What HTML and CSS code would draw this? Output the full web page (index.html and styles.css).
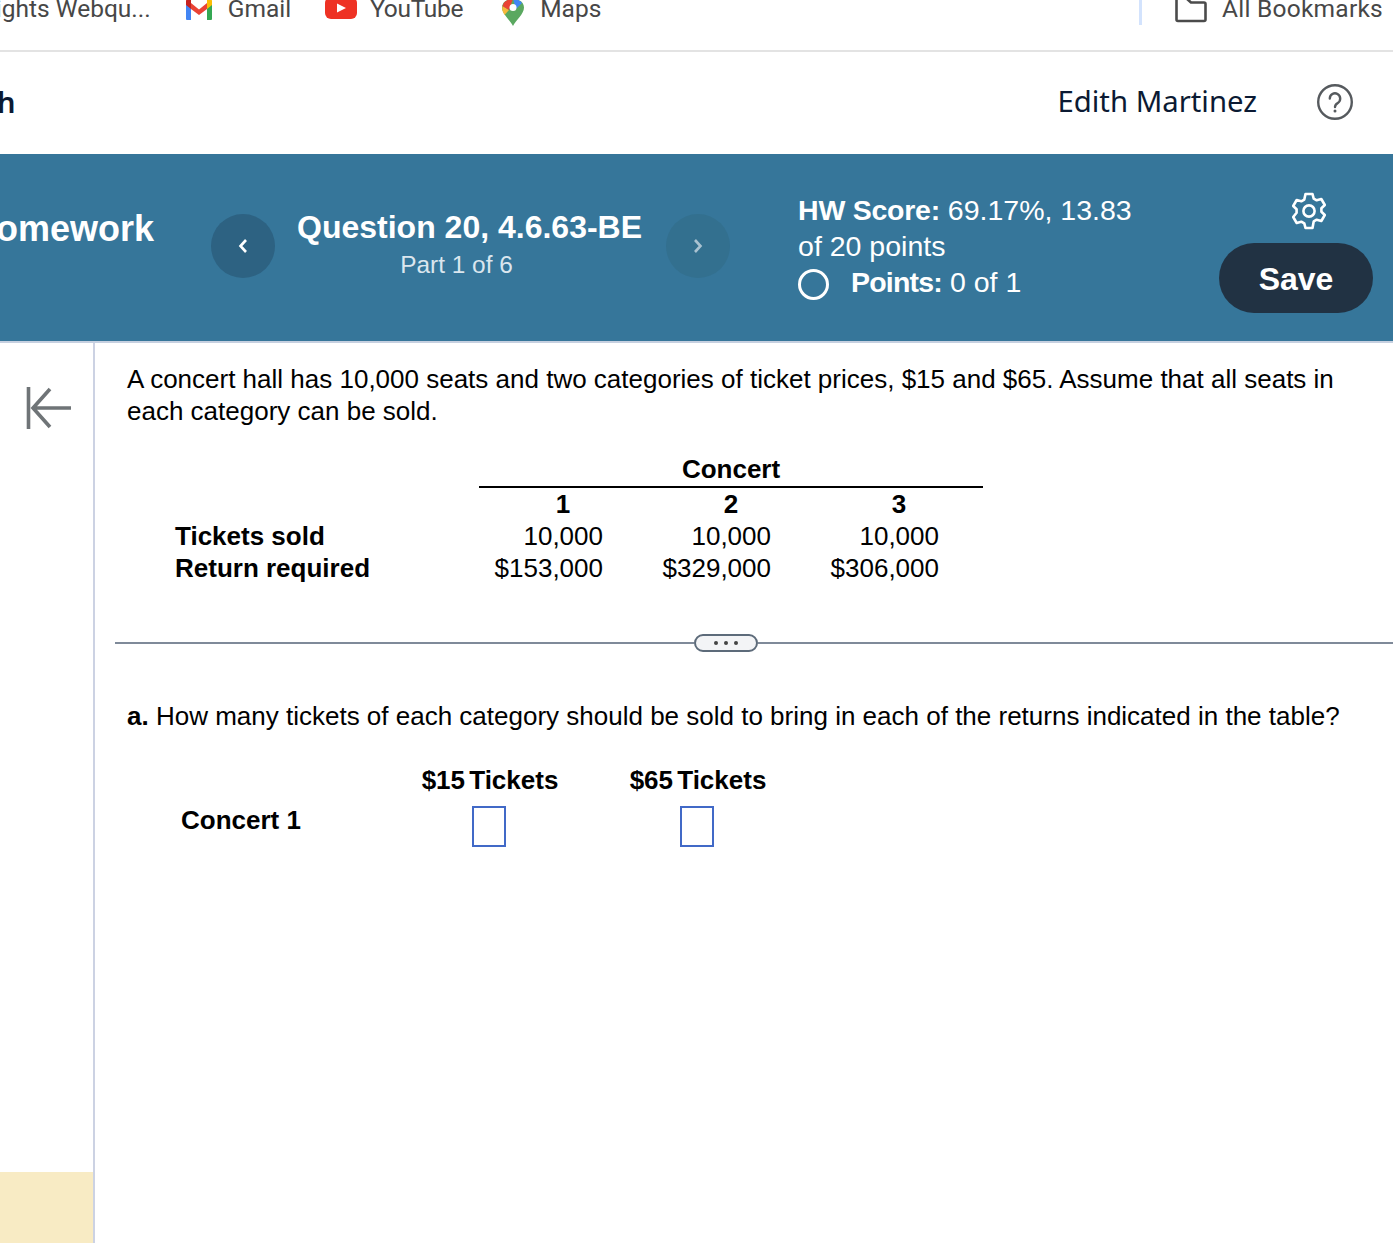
FILE: index.html
```html
<!DOCTYPE html>
<html lang="en">
<head>
<meta charset="utf-8">
<title>Homework</title>
<link rel="stylesheet" href="styles.css">
</head>
<body>
<div class="page">
  <nav class="bookmarks">
    <span class="bm bm-first">Insights Webqu...</span>
    <span class="bm bm-gmail">
      <svg class="ic-gmail" viewBox="0 0 28 24" width="28" height="24"><path d="M1 2v18a1 1 0 0 0 1 1h4V9z" fill="#4285f4"/><path d="M27 2v18a1 1 0 0 1-1 1h-4V9z" fill="#34a853"/><path d="M6 4l8 6.5L22 4v6l-8 6-8-6z" fill="#ea4335"/><path d="M1 1.500a3 3 0 0 1 5 -.5v9L1 6z" fill="#c5221f"/><path d="M27 1.500a3 3 0 0 0-5 -.5v9l5-4z" fill="#fbbc04"/></svg>
      Gmail</span>
    <span class="bm bm-yt">
      <svg viewBox="0 0 32 26" width="32" height="26"><rect x="0" y="0" width="32" height="22" rx="6" fill="#ee3224"/><path d="M12 6.500l9 4.500-9 4.500z" fill="#fff"/></svg>
      YouTube</span>
    <span class="bm bm-maps">
      <svg viewBox="0 0 24 28" width="24" height="28"><path d="M12 26C9 20 1 14 1 7.500 1 3 5 -1 12 -1s11 4 11 8.500C23 14 15 20 12 26z" fill="#5aa860"/><path d="M2 12C1 10 1 8 1.500 6L8 10 3.500 15z" fill="#f6b93b"/><path d="M1.500 6C3 1 7 -1 12 -1L8 10z" fill="#ea4335"/><path d="M12 -1c4 0 7 1.500 9 4L15 9z" fill="#4285f4"/><circle cx="12" cy="7.500" r="3.500" fill="#fff"/></svg>
      Maps</span>
    <span class="bm-spacer"></span>
    <span class="bm-sep"></span>
    <span class="bm bm-all">
      <svg viewBox="0 0 32 30" width="32" height="30"><path d="M1.500 1v21.500a1.500 1.500 0 0 0 1.500 1.500h26a1.500 1.500 0 0 0 1.500-1.500V7a1.500 1.500 0 0 0-1.500-1.500H16L11 1" fill="none" stroke="#4b4b4b" stroke-width="2.600" stroke-linejoin="round"/></svg>
      All Bookmarks</span>
  </nav>

  <header class="topbar">
    <span class="course">h</span>
    <span class="user">Edith Martinez</span>
    <svg class="help" viewBox="0 0 36 36" width="36" height="36"><circle cx="18" cy="18" r="16.800" fill="none" stroke="#565a5e" stroke-width="2.400"/><path d="M12.800 14.500a5.200 5.200 0 1 1 8 4.400c-1.900 1.200-2.800 2-2.800 4.100" fill="none" stroke="#565a5e" stroke-width="2.400" stroke-linecap="round"/><circle cx="18" cy="27" r="1.500" fill="#565a5e"/></svg>
  </header>

  <section class="band">
    <h1 class="band-title">Homework</h1>
    <button class="nav-btn nav-prev" type="button" aria-label="Previous question">
      <svg viewBox="0 0 12 18" width="12" height="18"><path d="M9 3L3.500 9 9 15" fill="none" stroke="#fff" stroke-width="2.600"/></svg>
    </button>
    <div class="question">
      <div class="q-name">Question 20, 4.6.63-BE</div>
      <div class="q-part">Part 1 of 6</div>
    </div>
    <button class="nav-btn nav-next" type="button" aria-label="Next question">
      <svg viewBox="0 0 12 18" width="12" height="18"><path d="M3 3l5.500 6L3 15" fill="none" stroke="#a9c2d1" stroke-width="2.600"/></svg>
    </button>
    <div class="score">
      <div><b>HW Score:</b> 69.17%, 13.83</div>
      <div>of 20 points</div>
      <div class="score-pts"><span class="ring"></span><span><b>Points:</b> 0 of 1</span></div>
    </div>
    <div class="actions">
      <svg class="gear" viewBox="0 0 36 38" width="36" height="38"><path d="M14.500 2h7l1.200 4.600 3 1.700 4.600-1.300 3.500 6-3.400 3.300v3.400l3.400 3.300-3.500 6-4.600-1.300-3 1.700L21.500 36h-7l-1.200-4.600-3-1.700-4.600 1.300-3.500-6L5.600 20.700v-3.400L2.200 14l3.500-6 4.600 1.300 3-1.700z" fill="none" stroke="#fff" stroke-width="2.600" stroke-linejoin="round"/><circle cx="18" cy="19" r="5.600" fill="none" stroke="#fff" stroke-width="2.600"/></svg>
      <button class="save" type="button">Save</button>
    </div>
  </section>

  <div class="body">
    <aside class="side">
      <svg class="collapse" viewBox="0 0 46 44" width="46" height="44"><path d="M2.500 1v42M45 22H8M24 3L7 22l17 19" fill="none" stroke="#6f7477" stroke-width="3.600"/></svg>
      <div class="side-note"></div>
    </aside>
    <main class="content">
      <p class="para intro">A concert hall has 10,000 seats and two categories of ticket prices, $15 and $65. Assume that all seats in each category can be sold.</p>
      <table class="data">
        <colgroup><col class="col-l"><col class="col-n"><col class="col-n"><col class="col-n"></colgroup>
        <thead>
          <tr><th class="lbl"></th><th class="group" colspan="3">Concert</th></tr>
          <tr><th class="lbl"></th><th>1</th><th>2</th><th>3</th></tr>
        </thead>
        <tbody>
          <tr><th class="lbl">Tickets sold</th><td>10,000</td><td>10,000</td><td>10,000</td></tr>
          <tr><th class="lbl">Return required</th><td>$153,000</td><td>$329,000</td><td>$306,000</td></tr>
        </tbody>
      </table>
      <div class="divider">
        <span class="rule rule-l"></span>
        <span class="pill"><i></i><i></i><i></i></span>
        <span class="rule rule-r"></span>
      </div>
      <p class="para ask"><b>a.</b> How many tickets of each category should be sold to bring in each of the returns indicated in the table?</p>
      <div class="answers">
        <span></span><b class="ans-h">$15 Tickets</b><b class="ans-h">$65 Tickets</b>
        <b class="ans-l">Concert 1</b>
        <span class="ans-c"><span class="box"></span></span>
        <span class="ans-c"><span class="box"></span></span>
      </div>
    </main>
  </div>
</div>
</body>
</html>
```

FILE: styles.css
```css
* { box-sizing: border-box; }
html, body { margin: 0; padding: 0; background: #fff; }
.page {
  width: 1393px;
  height: 1243px;
  overflow: hidden;
  display: flex;
  flex-direction: column;
  font-family: "Liberation Sans", Arial, sans-serif;
  color: #000;
}

/* bookmarks bar */
.bookmarks {
  height: 52px;
  flex: none;
  display: flex;
  align-items: flex-end;
  padding-bottom: 26px;
  border-bottom: 2px solid #e3e3e3;
  font-family: Roboto, sans-serif;
  font-size: 24.5px;
  color: #474747;
  white-space: nowrap;
  overflow: hidden;
}
.bm { display: flex; align-items: flex-end; line-height: 30px; gap: 15px; flex: none; }
.bm svg { flex: none; margin-bottom: 1px; }
.bm-first { margin-left: -37px; }
.bm-gmail { margin-left: 34px; }
.bm-yt { margin-left: 34px; gap: 13px; letter-spacing: -.3px; }
.bm-maps { margin-left: 38px; gap: 15px; }
.bm-maps svg { margin-bottom: -4px; }
.bm-spacer { flex: 1; }
.bm-sep { width: 3px; height: 30px; background: #d3e3fd; flex: none; margin-bottom: -1px; }
.bm-all { margin-left: 33px; margin-right: 10px; gap: 15px; letter-spacing: .25px; }
.bm-all svg { margin-bottom: -3px; }

/* user header */
.topbar {
  height: 102px;
  flex: none;
  display: flex;
  align-items: center;
  padding: 0 40px 2px 0;
  color: #0b1a33;
}
.course { font: 600 29px "Noto Sans", sans-serif; margin: 0 auto 2px -3px; }
.user { font: 400 29.3px "Noto Sans", sans-serif; margin: 0 60px 2px 0; }
.help { display: block; }

/* teal band */
.band {
  height: 189px;
  flex: none;
  display: flex;
  align-items: flex-start;
  background: #36769a;
  border-bottom: 2px solid #c6d0e0;
  color: #fff;
}
.band-title {
  margin: 53px 0 0 -30px;
  font-size: 36px;
  line-height: 44px;
  font-weight: 700;
  flex: none;
}
.nav-btn {
  width: 64px;
  height: 64px;
  margin-top: 60px;
  flex: none;
  border: 0;
  padding: 0;
  border-radius: 50%;
  display: flex;
  align-items: center;
  justify-content: center;
}
.nav-prev { background: #2d6282; margin-left: 57px; }
.nav-next { background: #33708f; }
.question { width: 391px; margin-top: 53px; text-align: center; flex: none; }
.q-name { font-size: 32px; line-height: 40px; font-weight: 700; padding-right: 2px; }
.q-part { font-size: 24.4px; line-height: 36px; color: #dbe6ee; padding-right: 28px; }
.score { margin-left: 68px; margin-top: 38px; width: 421px; font-size: 28.5px; line-height: 36px; flex: none; }
.score b { letter-spacing: -.25px; }
.score-pts { display: flex; align-items: center; gap: 22px; }
.score-pts b { letter-spacing: -.8px; }
.ring { width: 31px; height: 31px; border: 3.5px solid #fff; border-radius: 50%; flex: none; margin-top: 4px; }
.actions { flex: none; width: 154px; display: flex; flex-direction: column; align-items: center; margin-top: 38px; }
.gear { display: block; margin-left: 26px; }
.save {
  margin-top: 13px;
  width: 154px;
  height: 70px;
  border: 0;
  border-radius: 35px;
  padding: 2px 0 0;
  background: #213243;
  color: #fff;
  font: 700 32px "Liberation Sans", Arial, sans-serif;
}

/* body */
.body { flex: 1; display: flex; min-height: 0; }
.side {
  width: 95px;
  flex: none;
  border-right: 2px solid #ccd2e3;
  display: flex;
  flex-direction: column;
  align-items: flex-start;
}
.collapse { display: block; margin: 43px 0 0 26px; }
.side-note { margin-top: auto; width: 100%; height: 71px; background: #f8ebc4; }

.content { flex: 1; min-width: 0; }
.para { margin: 0 0 0 32px; font-size: 26px; line-height: 32px; width: 1240px; }
.intro { padding-top: 20px; margin-top: 0; }

.data {
  border-collapse: collapse;
  margin: 26px 0 0 80px;
  font-size: 26px;
  line-height: 32px;
  table-layout: fixed;
  width: 808px;
}
.col-l { width: 304px; }
.col-n { width: 168px; }
.data th, .data td { padding: 0; font-weight: 400; }
.data thead th { font-weight: 700; text-align: center; }
.data thead th.group { border-bottom: 2px solid #000; line-height: 33px; }
.data thead th.lbl { border: 0; }
.data th.lbl { font-weight: 700; text-align: left; }
.data td { text-align: right; padding-right: 44px; }

.divider { display: flex; align-items: center; margin: 50px 0 0 20px; }
.rule { height: 2px; background: #7f8a99; }
.rule-l { width: 579px; flex: none; }
.rule-r { flex: 1; }
.pill {
  width: 64px;
  height: 18px;
  flex: none;
  border: 2px solid #5d6b7a;
  border-radius: 9px;
  background: #f3f4f6;
  display: flex;
  align-items: center;
  justify-content: center;
  gap: 6px;
}
.pill i { width: 4px; height: 4px; border-radius: 50%; background: #444; }

.ask { margin-top: 48px; width: 1266px; white-space: nowrap; }

.answers {
  display: grid;
  grid-template-columns: 205px 208px 208px;
  grid-template-rows: 32px 48px;
  align-items: center;
  margin: 32px 0 0 86px;
  font-size: 26px;
  line-height: 32px;
}
.ans-h { text-align: center; word-spacing: -3px; white-space: nowrap; }
.ans-l { font-weight: 700; }
.ans-c { display: flex; justify-content: center; align-self: start; margin-top: 10px; padding-right: 2px; }
.box { width: 34px; height: 41px; border: 2px solid #4169c7; background: #fff; display: block; }
```
